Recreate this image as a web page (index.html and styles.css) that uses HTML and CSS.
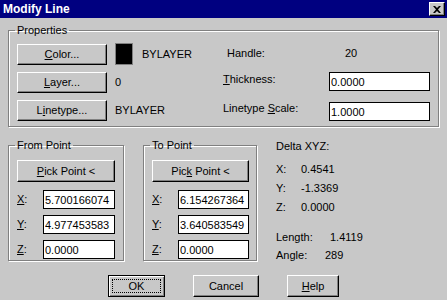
FILE: index.html
```html
<!DOCTYPE html>
<html lang="en">
<head>
    <meta charset="UTF-8">
    <title>Modify Line</title>
    <link rel="stylesheet" href="styles.css">
</head>
<body>
    <div class="titlebar">
        <span class="title">Modify Line</span>
        <span class="close">
            <svg width="8" height="7" viewBox="0 0 8 7"><path d="M0 0h2l2 2 2-2h2L5 3.5 8 7H6L4 5 2 7H0l3-3.5z" fill="#000"/></svg>
        </span>
    </div>

    <div class="content">
        <fieldset class="group props">
            <legend>Properties</legend>
            <div class="props-grid">
                <button class="btn prop-btn"><span><u>C</u>olor...</span></button>
                <div class="prop-val"><span class="swatch"></span><span>BYLAYER</span></div>
                <span class="handle-lbl">Handle:</span>
                <span class="handle-val">20</span>

                <button class="btn prop-btn"><span><u>L</u>ayer...</span></button>
                <div class="prop-val">0</div>
                <span class="prop-lbl thick-lbl"><u>T</u>hickness:</span>
                <input class="field thick-field" type="text" value="0.0000">

                <button class="btn prop-btn"><span>L<u>i</u>netype...</span></button>
                <div class="prop-val">BYLAYER</div>
                <span class="prop-lbl scale-lbl">Linetype <u>S</u>cale:</span>
                <input class="field scale-field" type="text" value="1.0000">
            </div>
        </fieldset>

        <div class="lower">
            <fieldset class="group point from">
                <legend>From Point</legend>
                <button class="btn pick-btn"><span><u>P</u>ick Point &lt;</span></button>
                <div class="coords">
                    <span><u>X</u>:</span><input class="field" type="text" value="5.700166074">
                    <span><u>Y</u>:</span><input class="field" type="text" value="4.977453583">
                    <span><u>Z</u>:</span><input class="field" type="text" value="0.0000">
                </div>
            </fieldset>

            <fieldset class="group point to">
                <legend>To Point</legend>
                <button class="btn pick-btn"><span>Pic<u>k</u> Point &lt;</span></button>
                <div class="coords">
                    <span><u>X</u>:</span><input class="field" type="text" value="6.154267364">
                    <span><u>Y</u>:</span><input class="field" type="text" value="3.640583549">
                    <span><u>Z</u>:</span><input class="field" type="text" value="0.0000">
                </div>
            </fieldset>

            <div class="delta">
                <div class="delta-title">Delta XYZ:</div>
                <div class="delta-row dx"><span class="axis">X:</span><span>0.4541</span></div>
                <div class="delta-row"><span class="axis">Y:</span><span>-1.3369</span></div>
                <div class="delta-row"><span class="axis">Z:</span><span>0.0000</span></div>
                <div class="delta-row len"><span class="len-lbl">Length:</span><span>1.4119</span></div>
                <div class="delta-row ang"><span class="ang-lbl">Angle:</span><span>289</span></div>
            </div>
        </div>

        <div class="actions">
            <button class="btn action default"><span class="focus">OK</span></button>
            <button class="btn action cancel"><span>Cancel</span></button>
            <button class="btn action help"><span><u>H</u>elp</span></button>
        </div>
    </div>
</body>
</html>
```
FILE: styles.css
```css
* {
    box-sizing: border-box;
}
html, body {
    margin: 0;
    padding: 0;
}
body {
    width: 447px;
    height: 300px;
    overflow: hidden;
    background-color: #c8c8c8;
    font-family: "Liberation Sans", Arial, sans-serif;
    font-size: 11px;
    line-height: 13px;
    color: #000;
}
.titlebar {
    height: 18px;
    background-color: #000080;
    display: flex;
    align-items: center;
    justify-content: space-between;
    padding: 0 2px 0 3px;
}
.title {
    color: #fff;
    font-weight: bold;
    font-size: 12px;
}
.close {
    width: 16px;
    height: 14px;
    background-color: #c8c8c8;
    border: 1px solid;
    border-color: #fff #000 #000 #fff;
    box-shadow: inset -1px -1px #808080;
    display: flex;
    align-items: center;
    justify-content: center;
}
.content {
    padding: 6px 0 0 8px;
}

/* group boxes */
.group {
    margin: 0;
    min-width: 0;
    border: 1px solid #808080;
    box-shadow: inset 1px 1px #fff, 1px 1px #fff;
}
.group legend {
    padding: 0 2px;
    margin-left: -2px;
    line-height: 13px;
}

/* buttons */
.btn {
    font: inherit;
    color: #000;
    background-color: #c8c8c8;
    border: 1px solid;
    border-color: #fff #000 #000 #fff;
    box-shadow: inset -1px -1px #808080;
    padding: 0;
    margin: 0;
    display: flex;
    align-items: center;
    justify-content: center;
}
.field {
    font: inherit;
    color: #000;
    background-color: #fff;
    border: 1px solid #000;
    height: 19px;
    padding: 0 1px;
    margin: 0;
    outline: none;
}

/* properties */
.props {
    width: 431px;
    padding: 7px 0 5px 8px;
}
.props-grid {
    display: grid;
    grid-template-columns: 98px 108px 106px 100px;
    grid-template-rows: 21px 21px 21px;
    row-gap: 7px;
}
.prop-btn {
    width: 90px;
    height: 21px;
}
.prop-val {
    display: flex;
    align-items: center;
    gap: 9px;
}
.swatch {
    width: 18px;
    height: 22px;
    background-color: #000;
    border: 1px solid #808080;
    margin-top: -1px;
}
.handle-lbl {
    align-self: start;
    margin-top: 3px;
    padding-left: 4px;
}
.handle-val {
    align-self: start;
    margin-top: 3px;
    padding-left: 16px;
}
.thick-lbl {
    align-self: start;
    margin-top: 1px;
}
.scale-lbl {
    align-self: start;
    margin-top: 2px;
}
.thick-field {
    width: 101px;
    align-self: start;
}
.scale-field {
    width: 101px;
    align-self: end;
}

/* lower part */
.lower {
    display: flex;
    align-items: flex-start;
    gap: 19px;
    margin-top: 12px;
}
.point {
    padding: 8px 8px 1px 8px;
}
.from {
    width: 116px;
}
.to {
    width: 114px;
    padding-right: 7px;
}
.pick-btn {
    width: 100%;
    height: 22px;
}
.coords {
    display: grid;
    grid-template-columns: 26px 1fr;
    grid-auto-rows: 19px;
    row-gap: 6px;
    align-items: center;
    margin-top: 8px;
}
.coords .field {
    width: 100%;
}

.delta {
    padding-top: 1px;
}
.delta-row {
    display: flex;
    margin-top: 6px;
}
.delta-row.dx {
    margin-top: 10px;
}
.delta-row.len {
    margin-top: 17px;
}
.delta-row.ang {
    margin-top: 5px;
}
.axis {
    width: 25px;
}
.len-lbl {
    width: 54px;
}
.ang-lbl {
    width: 49px;
}

/* dialog buttons */
.actions {
    display: flex;
    justify-content: center;
    gap: 28px;
    margin: 13px 0 0 -8px;
}
.action {
    height: 22px;
}
.default {
    width: 57px;
    border-color: #000;
    box-shadow: inset 1px 1px #fff, inset -1px -1px #808080;
    padding: 3px;
}
.focus {
    display: flex;
    align-items: center;
    justify-content: center;
    width: 100%;
    height: 100%;
    border: 1px dotted #000;
}
.cancel {
    width: 66px;
}
.help {
    width: 52px;
}
```
